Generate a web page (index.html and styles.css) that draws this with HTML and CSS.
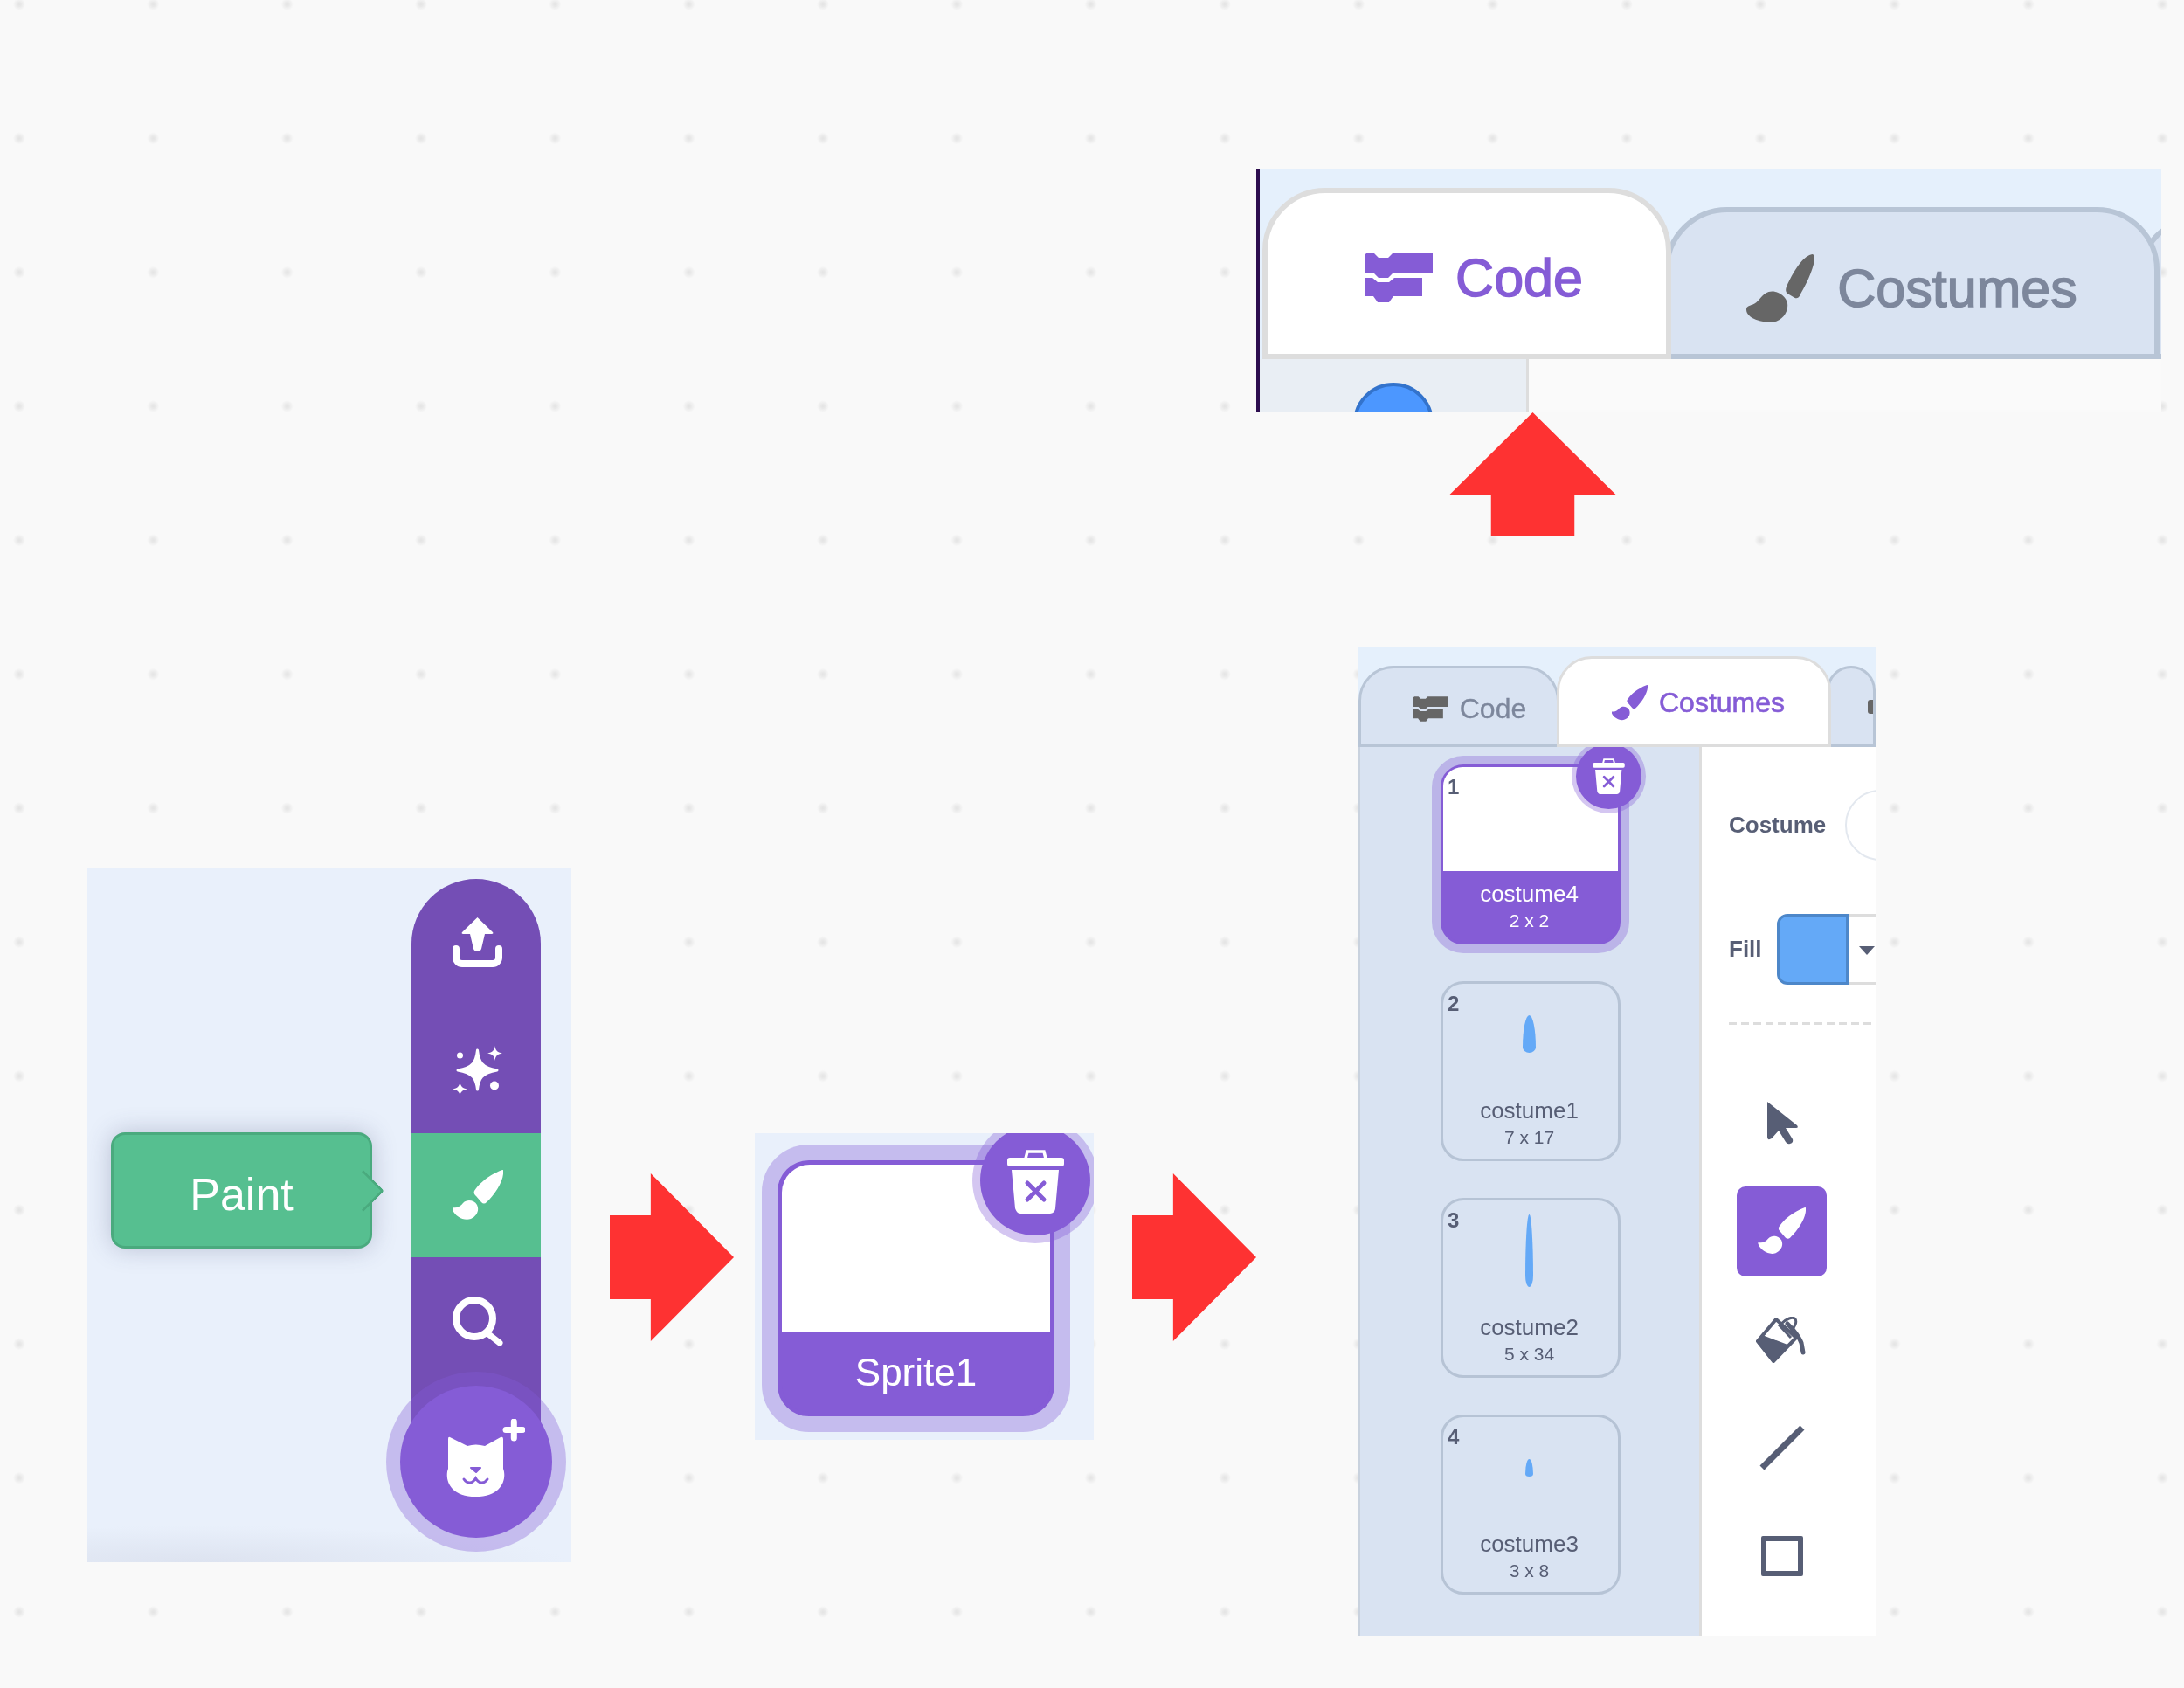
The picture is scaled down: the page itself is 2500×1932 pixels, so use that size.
FILE: index.html

```html
<!DOCTYPE html>
<html lang="en">
<head>
  <meta charset="UTF-8">
  <title>Scratch paint steps</title>
  <link rel="stylesheet" href="styles.css">
</head>
<body>

  <svg class="defs" aria-hidden="true">
    <symbol id="ic-brush" viewBox="0 0 58 58">
      <path d="M57 0C51 2 34 10 25 24C24 27 25 28 27 30L33 37C35 39 37 39 39 37C48 29 59 12 58 2C58 0 58 0 57 0Z"/>
      <path d="M0 43C5 44 9 42 12 38C17 33 25 35 28 40C31 46 28 53 21 56C13 59 3 53 0 46C-1 44 -1 43 0 43Z"/>
    </symbol>
    <symbol id="ic-blocks" viewBox="0 0 78 56">
      <path d="M2 0H11L16 5H27L32 0H78V23H32L27 28H16L11 23H0V2Z"/>
      <path d="M0 28H9L15 33H28L34 28H66V49H33L28 56H15L10 49H0Z"/>
    </symbol>
    <symbol id="ic-trash" viewBox="0 0 65 73">
      <path d="M21 10L23 2H42L44 10" fill="none" stroke="#fff" stroke-width="3.5"/>
      <rect x="0" y="9" width="65" height="10" rx="3" fill="#fff"/>
      <path d="M5 23H59L55 67C55 70 52 73 49 73H15C12 73 10 70 9 67Z" fill="#fff"/>
      <path d="M23 38L42 57M42 38L23 57" fill="none" stroke="#855cd6" stroke-width="5" stroke-linecap="round"/>
    </symbol>
  </svg>

  <div class="canvas">

    <div class="shot shot-menu">
      <div class="pill">
        <div class="pill-item">
          <svg class="pill-icon" viewBox="0 0 58 58">
            <path d="M28.5 0L46 17C47 18 46 19 45 19H37L33 36C32 40 25 40 24 36L20 19H12C11 19 10 18 11 17Z" fill="#fff"/>
            <path d="M4 36V46A7 7 0 0 0 11 53H46A7 7 0 0 0 53 46V36" fill="none" stroke="#fff" stroke-width="8" stroke-linecap="round"/>
          </svg>
        </div>
        <div class="pill-item">
          <svg class="pill-icon" viewBox="0 0 58 58" fill="#fff">
            <path d="M28.5 6C30 19 33 26 51 29C33 32 30 39 28.5 51C27 39 24 32 6 29C24 26 27 19 28.5 6Z" stroke="#fff" stroke-width="3" stroke-linejoin="round"/>
            <path d="M48.5 1C49 6 51 8.500 57 9.500C51 10.500 49 13 48.500 18C48 13 46 10.500 40 9.500C46 8.500 48 6 48.500 1Z"/>
            <path d="M8.500 42C9 47 11 49.500 17 50.500C11 51.500 9 54 8.500 58C8 54 6 51.500 0 50.500C6 49.500 8 47 8.500 42Z"/>
            <circle cx="8.500" cy="12" r="3.500"/>
            <circle cx="48" cy="46.500" r="5"/>
          </svg>
        </div>
        <div class="pill-item pill-item-on">
          <svg class="pill-icon"><use href="#ic-brush"/></svg>
        </div>
        <div class="pill-item">
          <svg class="pill-icon" viewBox="0 0 58 58">
            <circle cx="25" cy="26" r="21" fill="none" stroke="#fff" stroke-width="8"/>
            <path d="M40 43L54 54" fill="none" stroke="#fff" stroke-width="7" stroke-linecap="round"/>
          </svg>
        </div>
      </div>

      <div class="tip">Paint</div>

      <div class="cat-btn">
        <svg class="cat-icon" viewBox="0 0 90 90">
          <path d="M4 21L24 31Q33.500 28 44 31L62 21Q65 20 65 23L65 57C69 67 65 89 33.500 89C2 89 -2 67 2 57V23Q2 20 4 21Z" fill="#fff"/>
          <path d="M28 56H39L34 61Z" fill="#855cd6" stroke="#855cd6" stroke-width="2" stroke-linejoin="round"/>
          <path d="M20 69C24 75 30 74 33.500 68C37 74 43 75 47 69" fill="none" stroke="#855cd6" stroke-width="3" stroke-linecap="round"/>
          <path d="M77.300 3V22M68 12.500H87" fill="none" stroke="#fff" stroke-width="7" stroke-linecap="round"/>
        </svg>
      </div>
    </div>

    <div class="arrow arrow-right arrow-one"></div>

    <div class="shot shot-sprite">
      <div class="sprite-card">
        <div class="sprite-thumb"></div>
        <div class="sprite-name">Sprite1</div>
      </div>
      <div class="trash-big">
        <svg class="trash-big-icon"><use href="#ic-trash"/></svg>
      </div>
    </div>

    <div class="arrow arrow-right arrow-two"></div>

    <div class="shot shot-costumes">
      <div class="tabs">
        <div class="tab tab-first">
          <svg class="tab-icon ic-code"><use href="#ic-blocks"/></svg>
          <span>Code</span>
        </div>
        <div class="tab tab-on tab-second">
          <svg class="tab-icon ic-brush"><use href="#ic-brush"/></svg>
          <span>Costumes</span>
        </div>
        <div class="tab tab-third"><i class="tab-stub"></i></div>
      </div>

      <div class="editor">
        <div class="sidebar">
          <div class="card card-on">
            <b class="card-num">1</b>
            <div class="card-thumb"></div>
            <div class="card-label"><span class="card-name">costume4</span><span class="card-size">2 x 2</span></div>
            <div class="trash-small">
              <svg class="trash-small-icon"><use href="#ic-trash"/></svg>
            </div>
          </div>
          <div class="card">
            <b class="card-num">2</b>
            <div class="card-thumb"><i class="blob blob-mid"></i></div>
            <div class="card-label"><span class="card-name">costume1</span><span class="card-size">7 x 17</span></div>
          </div>
          <div class="card">
            <b class="card-num">3</b>
            <div class="card-thumb"><i class="blob blob-long"></i></div>
            <div class="card-label"><span class="card-name">costume2</span><span class="card-size">5 x 34</span></div>
          </div>
          <div class="card">
            <b class="card-num">4</b>
            <div class="card-thumb"><i class="blob blob-tiny"></i></div>
            <div class="card-label"><span class="card-name">costume3</span><span class="card-size">3 x 8</span></div>
          </div>
        </div>

        <div class="tools">
          <div class="field field-costume">
            <span class="field-label">Costume</span>
            <div class="name-input"></div>
          </div>
          <div class="field field-fill">
            <span class="field-label">Fill</span>
            <div class="fill-box">
              <div class="fill-swatch"></div>
              <div class="fill-drop"><i class="caret"></i></div>
            </div>
          </div>
          <div class="dashes"></div>

          <div class="tool">
            <svg class="tool-cursor" viewBox="0 0 36 50">
              <path d="M1 1L35 28Q37 31 34 31H22L30 44Q31 48 27 49Q24 50 22 47L14 34L6 43Q1 46 1 41Z" fill="#575e75"/>
            </svg>
          </div>
          <div class="tool tool-on">
            <svg class="tool-brush"><use href="#ic-brush"/></svg>
          </div>
          <div class="tool">
            <svg class="tool-fill" viewBox="0 0 59 53">
              <ellipse cx="34" cy="13" rx="15" ry="7" transform="rotate(-45 34 13)" fill="none" stroke="#575e75" stroke-width="3"/>
              <path d="M23 3L46 24L20 51L2 28Z" fill="#fff" stroke="#575e75" stroke-width="4" stroke-linejoin="round"/>
              <path d="M7 22L36 33L20 52L1 28Z" fill="#575e75" stroke="#575e75" stroke-width="2" stroke-linejoin="round"/>
              <path d="M36 8C44 16 49 22 52 30L54 41" fill="none" stroke="#575e75" stroke-width="5" stroke-linecap="round"/>
              <path d="M26 9L40 24" fill="none" stroke="#575e75" stroke-width="3"/>
            </svg>
          </div>
          <div class="tool">
            <svg class="tool-line" viewBox="0 0 52 52">
              <path d="M3 49L49 3" fill="none" stroke="#575e75" stroke-width="7"/>
            </svg>
          </div>
          <div class="tool">
            <div class="tool-rect"></div>
          </div>
        </div>
      </div>
    </div>

    <div class="shot shot-tabs">
      <div class="tabs tabs-big">
        <div class="tab tab-on tab-code-big">
          <svg class="tab-icon ic-code"><use href="#ic-blocks"/></svg>
          <span>Code</span>
        </div>
        <div class="tab tab-costumes-big">
          <svg class="tab-icon ic-brush-tall" viewBox="0 0 58 58"><path d="M56 0C50 1 42 10 34 28C33 31 34 33 36 34L41 37C43 38 45 37 46 34C53 22 58 10 58 3C58 1 57 0 56 0Z"/><path d="M19 32C25 30 34 35 35 42C36 50 30 57 22 58C14 58 0 55 0 47C0 44 3 44 7 42C11 40 13 34 19 32Z"/></svg>
          <span>Costumes</span>
        </div>
        <div class="tab tab-stub-big"></div>
      </div>
      <div class="lower">
        <div class="sprite-pane"><i class="blue-dot"></i></div>
      </div>
    </div>

    <div class="arrow arrow-up"></div>

  </div>

</body>
</html>
```

FILE: styles.css

```css
* {
  box-sizing: border-box;
}
body {
  margin: 0;
  font-family: "Liberation Sans", Arial, sans-serif;
  color: #575e75;
}
.defs {
  position: absolute;
  width: 0;
  height: 0;
}
.canvas {
  position: relative;
  width: 2500px;
  height: 1932px;
  overflow: hidden;
  background-color: #f9f9f9;
  background-image: radial-gradient(circle, #e4e4e4 0, #e8e8e8 2px, rgba(249, 249, 249, 0) 7px);
  background-size: 153.33px 153.33px;
  background-position: -54.67px -71.67px;
}

/* pasted screenshots sit freely on the slide */
.shot {
  position: absolute;
  overflow: hidden;
  filter: blur(0.5px);
}
.arrow {
  position: absolute;
  background: #fe3232;
}
.arrow-right {
  top: 1343px;
  width: 142px;
  height: 192px;
  clip-path: polygon(0 25%, 33% 25%, 33% 0, 100% 50%, 33% 100%, 33% 75%, 0 75%);
}
.arrow-one {
  left: 698px;
}
.arrow-two {
  left: 1296px;
}
.arrow-up {
  left: 1659px;
  top: 472px;
  width: 191px;
  height: 141px;
  clip-path: polygon(50% 0, 100% 67%, 75% 67%, 75% 100%, 25% 100%, 25% 67%, 0 67%);
}

/* sprite menu */
.shot-menu {
  left: 100px;
  top: 993px;
  width: 554px;
  height: 795px;
  background: radial-gradient(ellipse 420px 42px at 130px 100%, #dde3f0, rgba(233, 240, 251, 0)), #e9f0fb;
  padding: 13px 0 0 371px;
}
.pill {
  width: 148px;
  height: 640px;
  border-radius: 74px 74px 0 0;
  background: #744eb5;
  overflow: hidden;
}
.pill-item {
  height: 145px;
  display: flex;
  align-items: center;
  justify-content: center;
  padding-left: 4px;
}
.pill-item:first-child {
  height: 146px;
}
.pill-item-on {
  height: 142px;
  background: #56bf90;
  fill: #fff;
}
.pill-icon {
  width: 58px;
  height: 58px;
}
.tip {
  position: absolute;
  left: 27px;
  top: 303px;
  width: 299px;
  height: 133px;
  display: flex;
  align-items: center;
  justify-content: center;
  padding-top: 8px;
  background: #56bf90;
  border: 3px solid #4aaa7e;
  border-radius: 16px;
  box-shadow: 0 0 28px rgba(60, 70, 110, 0.28);
  color: #fff;
  font-size: 52px;
}
.tip::after {
  content: "";
  position: absolute;
  right: -10px;
  top: 50%;
  width: 31px;
  height: 31px;
  background: #56bf90;
  border-top: 3px solid #4aaa7e;
  border-right: 3px solid #4aaa7e;
  border-radius: 0 4px 0 0;
  transform: translateY(-50%) rotate(45deg);
}
.cat-btn {
  position: absolute;
  left: 357.500px;
  top: 593px;
  width: 174px;
  height: 174px;
  display: flex;
  border-radius: 50%;
  background: #855cd6;
  box-shadow: 0 0 0 16px rgba(133, 92, 214, 0.35);
}
.cat-icon {
  width: 90px;
  height: 90px;
  margin: 38px 0 0 53px;
}

/* selected sprite */
.shot-sprite {
  left: 864px;
  top: 1297px;
  width: 388px;
  height: 351px;
  background: #e9f0fb;
  padding: 31px 0 0 26px;
}
.sprite-card {
  width: 317px;
  height: 293px;
  display: flex;
  flex-direction: column;
  background: #855cd6;
  border: 5px solid #855cd6;
  border-radius: 36px;
  box-shadow: 0 0 0 18px rgba(133, 92, 214, 0.35);
}
.sprite-thumb {
  height: 192px;
  background: #fff;
  border-radius: 32px 32px 0 0;
}
.sprite-name {
  flex: 1;
  display: flex;
  align-items: center;
  justify-content: center;
  color: #fff;
  font-size: 44px;
}
.trash-big {
  position: absolute;
  left: 258px;
  top: -9px;
  width: 126px;
  height: 126px;
  display: flex;
  align-items: center;
  justify-content: center;
  border-radius: 50%;
  background: #855cd6;
  box-shadow: 0 0 0 9px rgba(133, 92, 214, 0.35);
}
.trash-big-icon {
  width: 65px;
  height: 73px;
  margin-top: 3px;
}

/* costumes tab screenshot */
.shot-costumes {
  left: 1555px;
  top: 740px;
  width: 592px;
  height: 1133px;
  background: #fff;
  display: flex;
  flex-direction: column;
}
.tabs {
  height: 115px;
  flex-shrink: 0;
  display: flex;
  align-items: flex-end;
  background: #e5f0fc;
}
.tab {
  position: relative;
  flex-shrink: 0;
  height: 93px;
  display: flex;
  align-items: center;
  justify-content: center;
  gap: 13px;
  background: #d9e3f2;
  border: 3px solid #b8c5d6;
  border-radius: 40px 40px 0 0;
  color: #7d879c;
  fill: #666;
  font-size: 32px;
  -webkit-text-stroke: 0.3px #7d879c;
}
.tab-on {
  z-index: 2;
  height: 104px;
  background: #fff;
  border-color: #ddd;
  color: #855cd6;
  fill: #855cd6;
  -webkit-text-stroke: 0.6px #855cd6;
}
.tab-first {
  width: 230px;
  padding: 6px 0 0 25px;
}
.tab-second {
  width: 314px;
  margin-left: -3px;
  padding: 3px 0 0 10px;
}
.tab-third {
  flex: 1;
  margin-left: -5px;
  justify-content: flex-end;
  overflow: hidden;
}
.tab-stub {
  width: 20px;
  height: 16px;
  margin-right: -14px;
  border-radius: 3px;
  background: #666;
}
.tab-icon.ic-code {
  width: 40px;
  height: 31px;
}
.tab-icon.ic-brush {
  width: 41px;
  height: 41px;
}
.editor {
  flex: 1;
  display: flex;
  min-height: 0;
}
.sidebar {
  width: 393px;
  flex-shrink: 0;
  overflow: hidden;
  display: flex;
  flex-direction: column;
  gap: 42px;
  padding: 20px 0 0 92px;
  background: #d9e3f2;
  border-left: 2px solid #c9d2de;
  border-right: 3px solid #ddd;
}
.card {
  position: relative;
  flex-shrink: 0;
  width: 206px;
  height: 206px;
  display: flex;
  flex-direction: column;
  border: 3px solid #b6c3d5;
  border-radius: 26px;
}
.card-on {
  background: #855cd6;
  border-color: #855cd6;
  box-shadow: 0 0 0 10px rgba(133, 92, 214, 0.35);
  color: #fff;
}
.card-num {
  position: absolute;
  left: 5px;
  top: 9px;
  font-size: 24px;
  line-height: 27px;
  color: #575e75;
}
.card-thumb {
  height: 115px;
  display: flex;
  align-items: center;
  justify-content: center;
  padding-right: 3px;
}
.card-on .card-thumb {
  height: 119px;
  background: #fff;
  border-radius: 22px 22px 0 0;
}
.card-label {
  flex: 1;
  display: flex;
  flex-direction: column;
  align-items: center;
  padding: 15px 3px 0 0;
}
.card-on .card-label {
  padding-top: 11px;
}
.card-name {
  font-size: 26px;
  line-height: 30px;
}
.card-size {
  font-size: 21px;
  line-height: 31px;
}
.blob {
  display: block;
  background: #64a9f7;
  border-radius: 50% / 85% 85% 15% 15%;
}
.blob-mid {
  width: 15px;
  height: 43px;
}
.blob-long {
  width: 9px;
  height: 83px;
}
.blob-tiny {
  width: 9px;
  height: 20px;
}
.trash-small {
  position: absolute;
  right: -27px;
  top: -27px;
  width: 75px;
  height: 75px;
  display: flex;
  align-items: center;
  justify-content: center;
  border-radius: 50%;
  background: #855cd6;
  box-shadow: 0 0 0 5px rgba(133, 92, 214, 0.35);
}
.trash-small-icon {
  width: 37px;
  height: 41px;
}
.tools {
  flex: 1;
  padding-left: 31px;
  border-top: 3px solid #ddd;
  margin-top: -3px;
  min-width: 0;
}
.field {
  height: 81px;
  display: flex;
  align-items: center;
  gap: 22px;
  white-space: nowrap;
}
.field-costume {
  margin-top: 49px;
}
.field-fill {
  margin-top: 61px;
  gap: 17px;
}
.field-label {
  font-size: 26px;
  font-weight: bold;
}
.name-input {
  flex-shrink: 0;
  width: 120px;
  height: 81px;
  border: 2px solid #e3e8ef;
  border-radius: 40px;
}
.fill-box {
  flex-shrink: 0;
  display: flex;
  height: 81px;
}
.fill-swatch {
  width: 82px;
  background: #64a9f7;
  border: 3px solid #4d87c9;
  border-radius: 12px 0 0 12px;
}
.fill-drop {
  width: 60px;
  display: flex;
  align-items: center;
  padding-left: 12px;
  border-top: 3px solid #ddd;
  border-bottom: 3px solid #ddd;
}
.caret {
  width: 0;
  height: 0;
  border-left: 9px solid transparent;
  border-right: 9px solid transparent;
  border-top: 10px solid #575e75;
  margin-top: 3px;
}
.dashes {
  height: 3px;
  margin-top: 43px;
  margin-bottom: 60.500px;
  background: repeating-linear-gradient(to right, #ddd 0, #ddd 9px, transparent 9px, transparent 14px);
}
.tool {
  width: 103px;
  height: 103px;
  margin: 0 0 21px 9px;
  display: flex;
  align-items: center;
  justify-content: center;
}
.tool-on {
  background: #855cd6;
  border-radius: 10px;
  fill: #fff;
}
.tool-cursor {
  width: 36px;
  height: 50px;
}
.tool-brush {
  width: 60px;
  height: 54px;
}
.tool-fill {
  width: 59px;
  height: 53px;
}
.tool-line {
  width: 52px;
  height: 52px;
}
.tool-rect {
  width: 48px;
  height: 46px;
  border: 6px solid #575e75;
  border-radius: 2px;
}

/* code tab screenshot */
.shot-tabs {
  left: 1438px;
  top: 193px;
  width: 1036px;
  height: 278px;
  background: #fafafa;
  border-left: 4px solid #2d0e4f;
}
.tabs-big {
  height: 218px;
  padding-left: 3px;
}
.tabs-big .tab {
  border-width: 6px;
  border-radius: 72px 72px 0 0;
  gap: 26px;
  font-size: 61px;
  -webkit-text-stroke: 1.500px #7d879c;
}
.tabs-big .ic-code {
  width: 78px;
  height: 56px;
}
.tabs-big .ic-brush-tall {
  width: 78px;
  height: 78px;
}
.tabs-big .tab-on {
  -webkit-text-stroke: 1.500px #855cd6;
}
.tab-code-big {
  width: 468px;
  height: 196px;
  padding: 10px 0 0 16px;
}
.tabs-big .tab-costumes-big {
  z-index: 1;
  width: 567px;
  height: 174px;
  margin-left: -8px;
  padding-top: 12px;
}
.tab-stub-big {
  width: 100px;
  height: 158px;
  margin-left: -20px;
}
.lower {
  height: 60px;
}
.sprite-pane {
  width: 308px;
  height: 60px;
  overflow: hidden;
  display: flex;
  justify-content: center;
  padding-top: 27px;
  background: #e9eef4;
  border-right: 3px solid #ddd;
}
.blue-dot {
  flex-shrink: 0;
  width: 92px;
  height: 92px;
  border-radius: 50%;
  background: #4c97ff;
  border: 4px solid #3373cc;
}
```
